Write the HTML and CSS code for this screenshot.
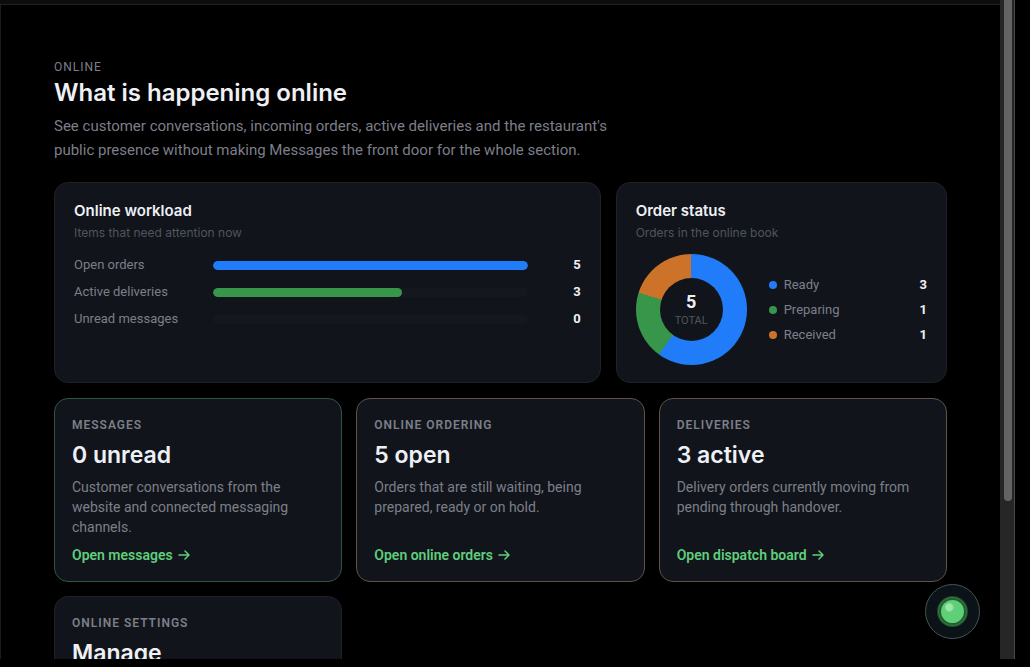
FILE: index.html
```html
<!DOCTYPE html>
<html lang="en">
<head>
  <meta charset="UTF-8" />
  <meta name="viewport" content="width=device-width,initial-scale=1" />
  <title>Online</title>
  <link rel="stylesheet" href="styles.css">
</head>
<body>
  <div class="app">
    <div class="view">
      <div class="topbar"></div>
      <main class="content">
        <header class="intro">
          <p class="eyebrow">Online</p>
          <h1>What is happening online</h1>
          <p class="lead">See customer conversations, incoming orders, active deliveries and the restaurant's public presence without making Messages the front door for the whole section.</p>
        </header>

        <div class="charts">
          <section class="panel">
            <h2>Online workload</h2>
            <p class="sub">Items that need attention now</p>
            <div class="bars">
              <div class="bar-row">
                <span>Open orders</span>
                <div class="track"><div class="fill blue" style="width:100%"></div></div>
                <strong>5</strong>
              </div>
              <div class="bar-row">
                <span>Active deliveries</span>
                <div class="track"><div class="fill green" style="width:60%"></div></div>
                <strong>3</strong>
              </div>
              <div class="bar-row">
                <span>Unread messages</span>
                <div class="track"><div class="fill" style="width:0%"></div></div>
                <strong>0</strong>
              </div>
            </div>
          </section>

          <section class="panel">
            <h2>Order status</h2>
            <p class="sub">Orders in the online book</p>
            <div class="status">
              <div class="donut">
                <div class="hole">
                  <strong>5</strong>
                  <span>Total</span>
                </div>
              </div>
              <ul class="legend">
                <li><i class="dot blue"></i><span>Ready</span><strong>3</strong></li>
                <li><i class="dot green"></i><span>Preparing</span><strong>1</strong></li>
                <li><i class="dot orange"></i><span>Received</span><strong>1</strong></li>
              </ul>
            </div>
          </section>
        </div>

        <div class="tiles">
          <article class="tile tile-ok">
            <h3>Messages</h3>
            <p class="figure">0 unread</p>
            <p class="text">Customer conversations from the website and connected messaging channels.</p>
            <a href="#messages">Open messages <svg class="arrow" viewBox="0 0 12 12"><path d="M1 6h10M7 2l4 4-4 4"/></svg></a>
          </article>
          <article class="tile tile-warn">
            <h3>Online ordering</h3>
            <p class="figure">5 open</p>
            <p class="text">Orders that are still waiting, being prepared, ready or on hold.</p>
            <a href="#orders">Open online orders <svg class="arrow" viewBox="0 0 12 12"><path d="M1 6h10M7 2l4 4-4 4"/></svg></a>
          </article>
          <article class="tile tile-warn">
            <h3>Deliveries</h3>
            <p class="figure">3 active</p>
            <p class="text">Delivery orders currently moving from pending through handover.</p>
            <a href="#dispatch">Open dispatch board <svg class="arrow" viewBox="0 0 12 12"><path d="M1 6h10M7 2l4 4-4 4"/></svg></a>
          </article>
          <article class="tile">
            <h3>Online settings</h3>
            <p class="figure">Manage</p>
          </article>
        </div>
      </main>
    </div>
    <div class="scrollbar"><div class="thumb"></div></div>
  </div>

  <button class="fab" aria-label="Assistant"><span class="orb"></span></button>
</body>
</html>
```
FILE: styles.css
```css
:root {
  --bg: #000;
  --card: #11151b;
  --border: #1e2227;
  --fg: #eef0f6;
  --muted: #7c7f89;
  --dim: #50545c;
  --blue: #217cf9;
  --green: #37964a;
  --orange: #cd7329;
  --link: #5fce7c;
}
* { box-sizing: border-box; margin: 0; padding: 0 }
html, body { height: 100%; overflow: hidden }
body {
  background: var(--bg); color: var(--fg);
  font-family: Roboto, "Liberation Sans", sans-serif;
}

.app { display: flex; height: 100vh; padding: 0 15px 8px 0 }
.view {
  flex: 1; min-width: 0; overflow: hidden;
  display: flex; flex-direction: column;
}
.topbar {
  flex: none; height: 5px;
  background: #0b0d0f; border-bottom: 1px solid #202224;
}
.content { flex: 1; padding: 54px 53px; border-left: 1px solid #1b1c1e }
.scrollbar {
  width: 15px; padding: 0 2px 0 4px;
  background: #262626; border-right: 1px solid #484848;
}
.thumb { height: 76%; background: #636363; border-radius: 0 0 4px 4px }

h1, h2, .sub, .figure { font-family: Inter, "Liberation Sans", sans-serif }

/* intro */
.eyebrow {
  font-size: 12px; line-height: 16px; letter-spacing: 1px;
  text-transform: uppercase; color: var(--muted);
}
h1 { margin-top: 2px; font-size: 24px; line-height: 32px; font-weight: 600 }
.lead {
  max-width: 580px; margin-top: 5px;
  font-size: 15px; line-height: 24px; color: var(--muted);
}

/* charts */
.charts {
  display: grid; grid-template-columns: 165fr 100fr; gap: 15px;
  margin-top: 20px;
}
.panel {
  padding: 18px 19px 17px;
  background: var(--card); border: 1px solid var(--border); border-radius: 14px;
}
h2 { font-size: 15px; line-height: 20px; font-weight: 600 }
.sub { margin-top: 4px; font-size: 12px; line-height: 16px; color: var(--dim) }
.blue { background: var(--blue) }
.green { background: var(--green) }
.orange { background: var(--orange) }

.bars { display: grid; gap: 9px; margin-top: 15px }
.bar-row {
  display: grid; grid-template-columns: 125px 1fr 39px; gap: 14px;
  align-items: center;
  font-size: 13px; line-height: 18px; color: var(--muted);
}
.bar-row strong, .legend strong { color: var(--fg); font-weight: 700; text-align: right }
.track { height: 9px; border-radius: 5px; background: #14181e; overflow: hidden }
.fill { height: 100%; border-radius: 5px }

.status { display: flex; align-items: center; gap: 22px; margin-top: 13px }
.donut {
  flex: none; width: 111px; height: 111px; border-radius: 50%;
  display: grid; place-items: center;
  background: conic-gradient(var(--blue) 0 60%, var(--green) 60% 80%, var(--orange) 80%);
}
.hole {
  width: 63px; height: 63px; border-radius: 50%; background: var(--card);
  display: flex; flex-direction: column; align-items: center; justify-content: center;
}
.hole strong { font-size: 18px; line-height: 22px; font-weight: 700 }
.hole span {
  font-size: 11px; line-height: 16px;
  text-transform: uppercase; color: var(--dim);
}
.legend { flex: 1; display: grid; gap: 7px; list-style: none }
.legend li {
  display: flex; align-items: center; gap: 7px;
  font-size: 13px; line-height: 18px; color: var(--muted);
}
.legend strong { margin-left: auto }
.dot { width: 8px; height: 8px; border-radius: 50% }

/* tiles */
.tiles {
  display: grid; grid-template-columns: repeat(3, 1fr); gap: 14px;
  margin-top: 15px;
}
.tile {
  display: flex; flex-direction: column;
  padding: 18px 17px 16px;
  background: var(--card); border: 1px solid var(--border); border-radius: 14px;
}
.tile-ok { border-color: #2f5546 }
.tile-warn { border-color: #625144 }
h3 {
  font-size: 12px; line-height: 16px; font-weight: 600; letter-spacing: 1px;
  text-transform: uppercase; color: var(--muted);
}
.figure { margin-top: 6px; font-size: 23px; line-height: 32px; font-weight: 600 }
.text { margin: 6px 0 8px; font-size: 14px; line-height: 20px; color: var(--muted) }
.tile a {
  display: flex; align-items: center; gap: 5px;
  margin-top: auto; font-size: 14px; line-height: 20px; font-weight: 600;
  color: var(--link); text-decoration: none;
}
.arrow {
  width: 12px; height: 12px;
  fill: none; stroke: currentColor; stroke-width: 1.5;
  stroke-linecap: round; stroke-linejoin: round;
}

/* floating assistant */
.fab {
  position: fixed; right: 50px; bottom: 28px;
  width: 55px; height: 55px; border-radius: 50%;
  display: grid; place-items: center;
  background: #0c1318; border: 1px solid #46554f; cursor: pointer;
}
.orb {
  width: 23px; height: 23px; border-radius: 50%;
  background: radial-gradient(circle at 36% 32%, #9ce8a8 0 3px, #5fd078 5px);
  box-shadow: 0 0 0 2px #275c33, 0 0 0 3px #2f7a3f, 0 0 0 4px #1f4a2b;
}
```
